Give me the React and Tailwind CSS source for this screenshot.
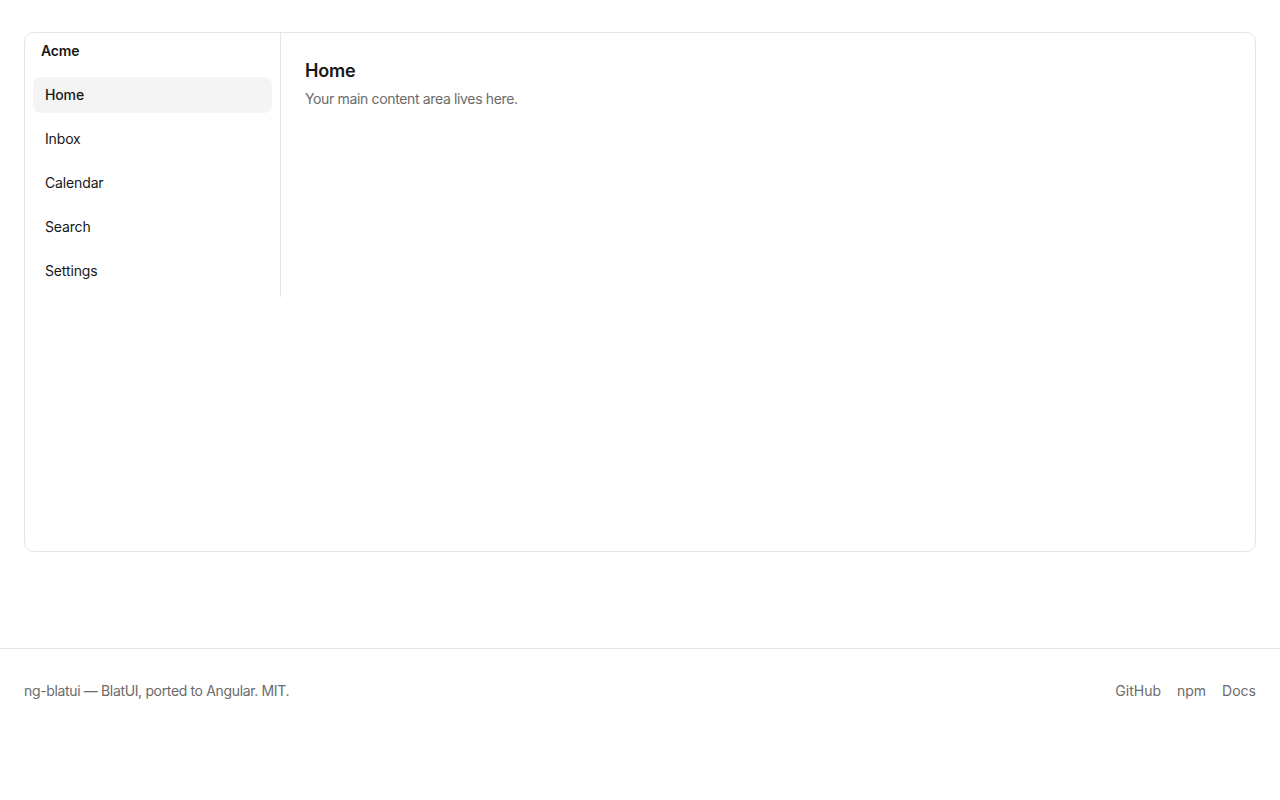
import React from "react";

const items = ["Home", "Inbox", "Calendar", "Search", "Settings"];

export default function App() {
  return (
    <div className="min-h-screen bg-white text-[#171717]" style={{ fontFamily: "Inter, 'Noto Sans', sans-serif" }}>
      <div className="px-6 pt-8">
        <div className="flex h-[520px] items-start rounded-[10px] border border-[#e5e5e5]">
          <aside className="w-[256px] shrink-0 border-r border-[#e5e5e5] p-2">
            <div className="px-2 text-[14px] font-semibold leading-5 tracking-[-0.01em]">Acme</div>
            <nav className="mt-4 flex flex-col gap-2">
              {items.map((it, i) => (
                <div
                  key={it}
                  className={
                    "flex h-9 items-center rounded-lg px-3 pb-px text-[14px] tracking-[-0.01em] " +
                    (i === 0 ? "bg-[#f4f4f4] font-medium" : "")
                  }
                >
                  {it}
                </div>
              ))}
            </nav>
          </aside>
          <main className="flex-1 p-6">
            <h1 className="text-[18px] font-semibold leading-7 tracking-[-0.01em]">Home</h1>
            <p className="mt-1 text-[14px] leading-5 tracking-[-0.025em] text-[#6b6b6b]">Your main content area lives here.</p>
          </main>
        </div>
      </div>
      <footer className="mt-24 border-t border-[#e5e5e5] px-6 py-8">
        <div className="flex items-center justify-between text-[14px] leading-5 text-[#6b6b6b]">
          <span className="tracking-[-0.025em]">ng-blatui — BlatUI, ported to Angular. MIT.</span>
          <div className="flex gap-4">
            <span>GitHub</span>
            <span>npm</span>
            <span>Docs</span>
          </div>
        </div>
      </footer>
    </div>
  );
}
